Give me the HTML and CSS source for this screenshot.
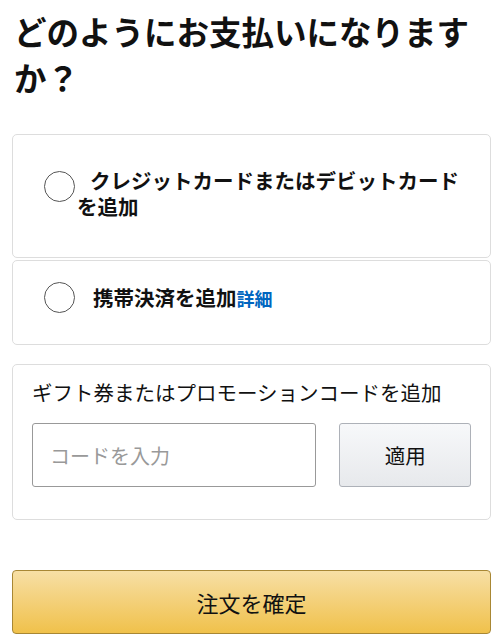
FILE: index.html
```html
<!doctype html>
<html lang="ja">
<head>
    <meta charset="UTF-8">
    <meta name="viewport" content="width=device-width, initial-scale=1.0">
    <title>お支払い方法</title>
    <link rel="stylesheet" href="styles.css">
</head>
<body>
    <div class="page">
        <h1 class="title">どのようにお支払いになりますか？</h1>

        <div class="card card-card">
            <span class="radio"></span>
            <span class="label">クレジットカードまたはデビットカードを追加</span>
        </div>

        <div class="card card-mobile">
            <span class="radio"></span>
            <span class="label">携帯決済を追加<a class="more" href="#">詳細</a></span>
        </div>

        <div class="card card-gift">
            <div class="gift-title">ギフト券またはプロモーションコードを追加</div>
            <div class="gift-row">
                <input class="code" type="text" placeholder="コードを入力">
                <button class="apply" type="button">適用</button>
            </div>
        </div>

        <button class="order" type="button">注文を確定</button>
    </div>
</body>
</html>
```

FILE: styles.css
```css
*{
    margin: 0;
    padding: 0;
    box-sizing: border-box;
}
body{
    background: #fff;
    color: #111;
    font-family: "Noto Sans CJK JP", "Noto Sans", sans-serif;
}
.page{
    padding: 8px 11px 0 12px;
}
.title{
    font-size: 32.5px;
    font-weight: bold;
    line-height: 46px;
    padding-left: 2px;
    padding-right: 12px;
    margin-bottom: 34px;
}
.card{
    border: 1px solid #ddd;
    border-radius: 5px;
    background: #fff;
}
.card-card, .card-mobile{
    display: flex;
    align-items: flex-start;
    padding-left: 31px;
    padding-right: 20px;
}
.card-card{
    height: 124px;
    padding-top: 32px;
    margin-bottom: 2px;
}
.card-mobile{
    height: 85px;
    padding-top: 23px;
}
.radio{
    flex: none;
    width: 31px;
    height: 31px;
    border: 1px solid #555;
    border-radius: 50%;
    margin-top: 4px;
}
.card-mobile .radio{
    margin-top: -2px;
}
.label{
    margin-left: 2px;
    font-size: 20.5px;
    font-weight: bold;
    line-height: 26px;
    text-indent: 13px;
}
.card-mobile .label{
    text-indent: 16px;
}
.more{
    color: #0066c0;
    text-decoration: none;
    font-size: 18px;
}
.card-gift{
    margin-top: 19px;
    height: 156px;
    padding: 14px 19px 0 19px;
}
.gift-title{
    font-size: 20.5px;
    line-height: 26px;
    color: #111;
    white-space: nowrap;
}
.gift-row{
    display: flex;
    gap: 23px;
    margin-top: 18px;
}
.code{
    width: 287px;
    height: 64px;
    border: 1px solid #999;
    border-radius: 3px;
    padding-left: 17px;
    font-family: inherit;
    font-size: 20px;
    color: #111;
    outline: none;
}
.code::placeholder{
    color: #999;
}
.apply{
    width: 133px;
    height: 64px;
    border: 1px solid #adb1b8;
    border-radius: 3px;
    background: linear-gradient(#f7f8fa, #e7e9ec);
    font-family: inherit;
    font-size: 20.5px;
    color: #111;
}
.order{
    display: block;
    width: 100%;
    height: 64px;
    margin-top: 50px;
    border: 1px solid #a88734;
    border-radius: 4px;
    background: linear-gradient(#f7dfa5, #f0c14b);
    font-family: inherit;
    font-size: 22px;
    color: #111;
}
```
